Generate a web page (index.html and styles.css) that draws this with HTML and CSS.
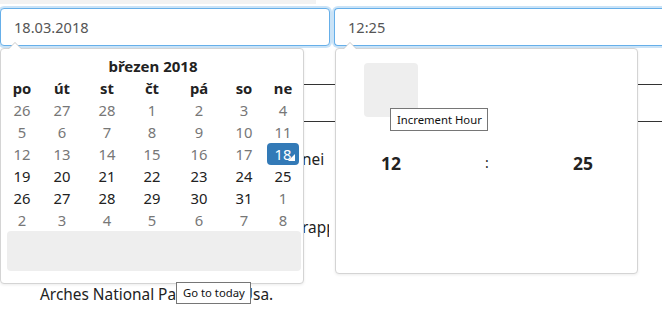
FILE: index.html
```html
<!DOCTYPE html>
<html lang="cs">
<head>
<meta charset="utf-8">
<title>Datetimepicker</title>
<link rel="stylesheet" href="styles.css">
</head>
<body>
<div class="topbar"></div>
<div class="pickers">
  <div class="field">
    <div class="input">18.03.2018</div>
    <div class="dropdown cal">
      <div class="cal-title">březen 2018</div>
      <div class="cal-grid">
        <div class="dow">po</div><div class="dow">út</div><div class="dow">st</div><div class="dow">čt</div><div class="dow">pá</div><div class="dow">so</div><div class="dow">ne</div>
        <div class="day muted">26</div><div class="day muted">27</div><div class="day muted">28</div><div class="day muted">1</div><div class="day muted">2</div><div class="day muted">3</div><div class="day muted">4</div>
        <div class="day muted">5</div><div class="day muted">6</div><div class="day muted">7</div><div class="day muted">8</div><div class="day muted">9</div><div class="day muted">10</div><div class="day muted">11</div>
        <div class="day muted">12</div><div class="day muted">13</div><div class="day muted">14</div><div class="day muted">15</div><div class="day muted">16</div><div class="day muted">17</div><div class="day active">18</div>
        <div class="day">19</div><div class="day">20</div><div class="day">21</div><div class="day">22</div><div class="day">23</div><div class="day">24</div><div class="day">25</div>
        <div class="day">26</div><div class="day">27</div><div class="day">28</div><div class="day">29</div><div class="day">30</div><div class="day">31</div><div class="day muted">1</div>
        <div class="day muted">2</div><div class="day muted">3</div><div class="day muted">4</div><div class="day muted">5</div><div class="day muted">6</div><div class="day muted">7</div><div class="day muted">8</div>
      </div>
      <div class="today-bar"></div>
    </div>
  </div>
  <div class="field field-right">
    <div class="input input-right">12:25</div>
    <div class="dropdown time">
      <div class="time-grid">
        <div class="cell"><div class="inc-btn"></div></div>
        <div class="cell"></div>
        <div class="cell"></div>
      </div>
      <div class="time-grid values">
        <div class="cell">12</div>
        <div class="cell sep">:</div>
        <div class="cell">25</div>
      </div>
    </div>
  </div>
</div>
<div class="content">
  <div class="rule-row"></div>
  <p class="line line-a">nei</p>
  <p class="line line-b">rappel</p>
  <p class="line line-c">Arches National Park, Utah, Usa.</p>
</div>
<div class="tooltip tip-hour">Increment Hour</div>
<div class="tooltip tip-today">Go to today</div>
</body>
</html>
```

FILE: styles.css
```css
* { box-sizing: border-box; }
html, body { margin: 0; padding: 0; background: #fff; }
body {
  font-family: "Noto Sans", "Open Sans", sans-serif;
  color: #333;
  width: 662px;
  height: 316px;
  overflow: hidden;
  position: relative;
}
.topbar { width: 316px; height: 4px; background: #f2f2f2; }
.pickers { display: flex; gap: 4px; margin-top: 4px; width: 662px; }
.field { position: relative; width: 330px; flex: none; }
.field-right { width: 328px; }
.input {
  height: 38px;
  border: 1px solid #66afe9;
  border-radius: 4px;
  box-shadow: 0 0 0 2px rgba(102, 175, 233, .35);
  padding: 0 13px;
  font-size: 14.6px;
  line-height: 36px;
  color: #555;
  background: #fff;
}
.input-right {
  border-right: none;
  border-radius: 4px 0 0 4px;
  clip-path: inset(-4px 0 -4px -4px);
}
.dropdown {
  position: absolute;
  top: 40px;
  background: #fff;
  border: 1px solid #d4d4d4;
  border-radius: 4px;
  box-shadow: 0 1px 3px rgba(0, 0, 0, .08);
  z-index: 5;
}
.dropdown::before {
  content: "";
  position: absolute;
  top: -7px;
  left: 7px;
  border-left: 7px solid transparent;
  border-right: 7px solid transparent;
  border-bottom: 7px solid #ccc;
}
.dropdown::after {
  content: "";
  position: absolute;
  top: -6px;
  left: 8px;
  border-left: 6px solid transparent;
  border-right: 6px solid transparent;
  border-bottom: 6px solid #fff;
}
.cal { left: 0; width: 304px; height: 236px; padding: 6px 1px 0 6px; }
.cal-title {
  width: 292px;
  height: 22px;
  line-height: 22px;
  text-align: center;
  font-weight: 700;
  font-size: 15px;
  color: #222;
}
.cal-grid {
  display: grid;
  grid-template-columns: 30px 50px 40px 50px 44px 46px 32px;
  grid-auto-rows: 22px;
  font-size: 14.8px;
}
.dow, .day { text-align: center; line-height: 22px; }
.dow { font-weight: 700; color: #222; }
.day { color: #222; }
.day.muted { color: #777; }
.day.active {
  background: #337ab7;
  color: #fff;
  border-radius: 4px;
  position: relative;
}
.day.active::before {
  content: "";
  position: absolute;
  right: 4px;
  bottom: 4px;
  border-left: 7px solid transparent;
  border-bottom: 7px solid #fff;
}
.today-bar { width: 294px; height: 40px; background: #eee; border-radius: 4px; }
.time { left: 1px; width: 303px; height: 226px; padding: 14px 7px 0 7px; }
.time-grid { display: grid; grid-template-columns: 96px 96px 96px; }
.cell { display: flex; justify-content: center; }
.inc-btn { width: 54px; height: 54px; background: #eee; border-radius: 4px; }
.values {
  margin-top: 19px;
  height: 54px;
  line-height: 54px;
  font-size: 17.5px;
  font-weight: 700;
  color: #222;
}
.values .sep { font-size: 14px; font-weight: 400; }
.content { padding-top: 38px; font-size: 15.4px; color: #222; }
.rule-row { height: 38px; border-top: 1px solid #333; border-bottom: 1px solid #333; }
.line { margin: 0; height: 22px; line-height: 22px; white-space: nowrap; overflow: hidden; }
.line-a { margin-top: 27px; padding-left: 302px; width: 328px; }
.line-b { margin-top: 46px; padding-left: 302px; width: 329px; }
.line-c { margin-top: 45px; padding-left: 40px; }
.tooltip {
  position: absolute;
  background: #fff;
  border: 1px solid #767676;
  color: #111;
  font-size: 11.3px;
  padding: 0 6px;
  white-space: nowrap;
  z-index: 10;
}
.tip-hour { left: 390px; top: 108px; width: 98px; height: 23px; line-height: 21px; }
.tip-today { left: 176px; top: 282px; width: 75px; height: 22px; line-height: 20px; }
```
